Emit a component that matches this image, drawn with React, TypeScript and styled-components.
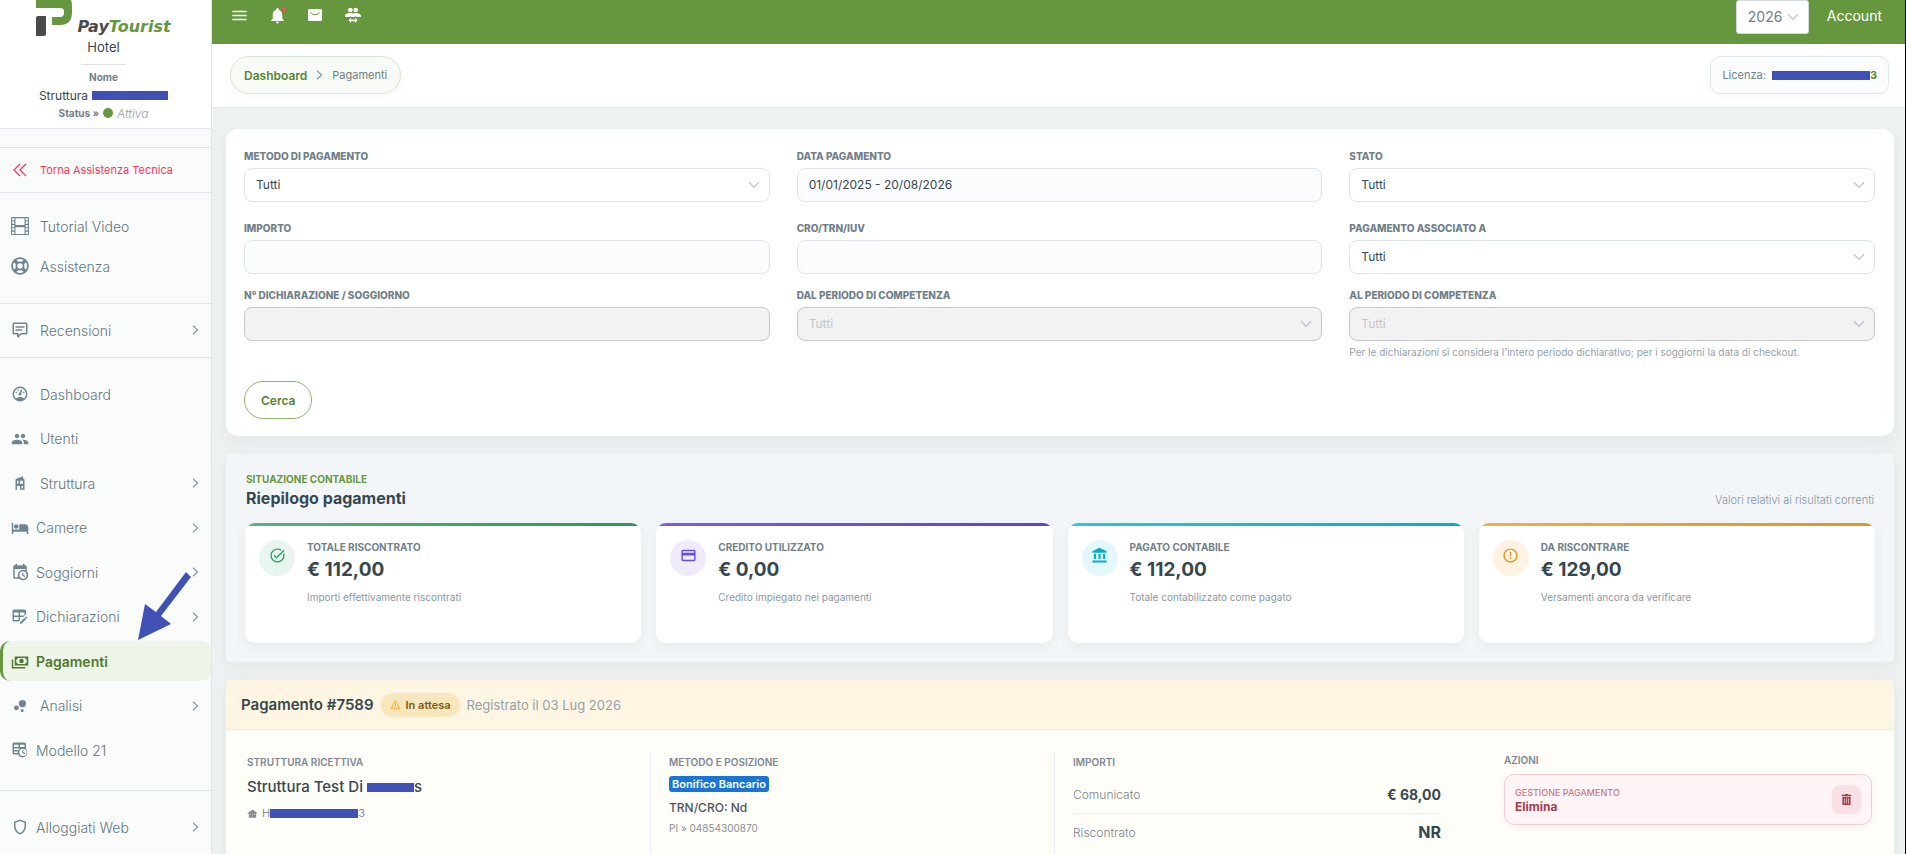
import React from "react";
import styled, { createGlobalStyle, css } from "styled-components";
import {
  MdAccountBalance,
  MdBubbleChart,
  MdCreditCard,
  MdErrorOutline,
  MdGroup,
  MdHotel,
  MdMenu,
  MdNotifications,
  MdOtherHouses,
  MdOutlineShield,
  MdTaskAlt,
  MdWarningAmber,
} from "react-icons/md";
import { BsFilm } from "react-icons/bs";
import { FaRegLifeRing, FaTrashAlt } from "react-icons/fa";

const green = "#66963d";
const ink = "#37474f";
const slate = "#6f8089";
const line = "#dde5ea";
const marker = "#3f51b5";

const GlobalStyle = createGlobalStyle`
  *, *::before, *::after { box-sizing: border-box; }
  body {
    margin: 0;
    font-family: Inter, "Open Sans", "Liberation Sans", sans-serif;
    font-size: 12px;
    color: ${ink};
    background: #edf1f2;
  }
  button, input, select { font-family: inherit; }
  a { color: inherit; text-decoration: none; }
  svg { display: block; flex: none; }
`;

const Shell = styled.div`
  display: flex;
  height: 100vh;
  overflow: hidden;
  border-right: 1px solid #000;
`;

/* Sidebar */

const Sidebar = styled.aside`
  position: relative;
  flex: none;
  width: 212px;
  background: #fafcfc;
  border-right: 1px solid ${line};
`;

const Profile = styled.div`
  display: flex;
  flex-direction: column;
  align-items: center;
  height: 129px;
  padding-right: 4px;
  background: #fff;
  border-bottom: 1px solid ${line};
`;

const Logo = styled.a`
  display: flex;
  align-items: flex-end;
  gap: 5px;
`;

const LogoText = styled.span`
  font: italic bold 16px/18px "DejaVu Sans", sans-serif;
  color: #4a4a4a;

  b {
    color: ${green};
  }
`;

const ProfileKind = styled.div`
  font-size: 13px;
  line-height: 22px;
`;

const ProfileRule = styled.hr`
  width: 45px;
  margin: 6px 0 3px;
  border: 0;
  border-top: 1px solid ${line};
`;

const ProfileLine = styled.div`
  display: flex;
  align-items: center;
  gap: 4px;
  height: 18px;
  font-size: 12px;

  b {
    font-size: 10px;
    color: ${slate};
  }
  i {
    color: #90a0a9;
    font-weight: 300;
  }
`;

const StatusDot = styled.span`
  width: 10px;
  height: 10px;
  border-radius: 50%;
  background: ${green};
`;

const Redaction = styled.span<{ $width: number }>`
  display: inline-block;
  width: ${(p) => p.$width}px;
  height: 9px;
  background: ${marker};
`;

const NavGroup = styled.nav<{ $height: number; $top?: number; $bottom?: number }>`
  display: flex;
  flex-direction: column;
  justify-content: space-between;
  min-height: ${(p) => p.$height}px;
  padding: ${(p) => p.$top ?? 0}px 0 ${(p) => p.$bottom ?? p.$top ?? 0}px;
  border-bottom: 1px solid ${line};
`;

const NavItem = styled.a<{ $active?: boolean; $tight?: boolean; $alert?: boolean }>`
  display: flex;
  align-items: center;
  gap: ${(p) => (p.$tight ? 7 : 11)}px;
  height: 40px;
  padding: 0 12px 0 11px;
  font-size: 14px;
  font-weight: 300;
  color: #64757e;

  svg {
    color: #6f8590;
  }
  ${(p) =>
    p.$alert &&
    css`
      font-size: 11px;
      font-weight: 400;
      color: #ef3b56;
      svg {
        color: #ef3b56;
      }
    `}
  ${(p) =>
    p.$active &&
    css`
      font-weight: 600;
      color: #4f7a2c;
      background: #edf4e8;
      border-left: 3px solid ${green};
      border-radius: 10px;
      padding-left: 8px;
      svg {
        color: #4f7a2c;
      }
    `}
`;

const NavLabel = styled.span`
  flex: 1;
`;

const PointerArrow = styled.svg`
  position: absolute;
  left: 136px;
  top: 570px;
`;

/* Top bar */

const Main = styled.div`
  display: flex;
  flex-direction: column;
  flex: 1;
  min-width: 0;
`;

const TopBar = styled.header`
  display: flex;
  align-items: flex-start;
  justify-content: space-between;
  height: 44px;
  padding: 0 23px 0 17px;
  background: ${green};
`;

const TopIcons = styled.div`
  display: flex;
  gap: 18px;
  padding-top: 5px;
`;

const IconButton = styled.button`
  position: relative;
  display: grid;
  place-items: center;
  width: 20px;
  height: 20px;
  padding: 0;
  border: 0;
  background: none;
  color: #fff;
`;

const AlertDot = styled.span`
  position: absolute;
  top: 2px;
  right: 1px;
  width: 5px;
  height: 5px;
  border-radius: 50%;
  background: #ef5350;
`;

const TopRight = styled.div`
  display: flex;
  gap: 18px;
  font-size: 14px;
  line-height: 32px;
  color: #fff;
`;

const SelectWrap = styled.div`
  position: relative;
  display: flex;
  width: 100%;

  svg {
    position: absolute;
    right: 10px;
    top: 13px;
    pointer-events: none;
  }
`;

const YearWrap = styled(SelectWrap)`
  width: 73px;
`;

const YearSelect = styled.select`
  width: 73px;
  height: 34px;
  padding: 0 24px 2px 11px;
  appearance: none;
  border: 1px solid #d3dadf;
  border-radius: 3px;
  background: #fff;
  font-size: 14px;
  color: ${slate};
`;

const SubHeader = styled.div`
  display: flex;
  flex: none;
  justify-content: space-between;
  height: 64px;
  padding: 12px 16px 0 18px;
  background: #fff;
  border-bottom: 1px solid ${line};
`;

const Breadcrumb = styled.nav`
  display: flex;
  align-items: center;
  gap: 9px;
  height: 38px;
  padding: 0 13px;
  border: 1px solid #d9e6cf;
  border-radius: 19px;
  background: #f8faf6;
  box-shadow: 0 3px 8px rgba(60, 80, 90, 0.04);
  font-size: 11px;
  color: ${slate};

  a {
    font-size: 12px;
    font-weight: 600;
    color: #568530;
  }
`;

const License = styled.div`
  display: flex;
  align-items: center;
  height: 38px;
  padding: 0 11px;
  border: 1px solid #e0e7ec;
  border-radius: 10px;
  background: #fafcfe;
  box-shadow: 0 3px 8px rgba(60, 80, 90, 0.04);
  font-size: 11px;
  color: ${slate};

  b {
    display: flex;
    align-items: center;
    margin-left: 6px;
    color: #568530;
  }
`;

/* Content */

const Content = styled.main`
  display: flex;
  flex-direction: column;
  flex: 1;
  gap: 18px;
  min-height: 0;
  padding: 21px 11px 0 14px;
  overflow: hidden;
`;

const FilterCard = styled.form`
  flex: none;
  padding: 19px 19px 17px 18px;
  border-radius: 12px;
  background: #fff;
  box-shadow: 0 6px 18px rgba(60, 80, 90, 0.06);
`;

const FieldRow = styled.div<{ $after: number }>`
  display: grid;
  grid-template-columns: repeat(3, 1fr);
  column-gap: 27px;
  margin-bottom: ${(p) => p.$after}px;
`;

const Field = styled.div`
  display: flex;
  flex-direction: column;
  gap: 4px;
`;

const FieldLabel = styled.label`
  font-size: 10px;
  line-height: 16px;
  font-weight: 800;
  text-transform: uppercase;
  color: ${slate};
`;

const control = css`
  width: 100%;
  height: 34px;
  padding: 0 11px 2px;
  border: 1px solid ${line};
  border-radius: 8px;
  font-size: 12px;
  color: ${ink};

  &:disabled {
    border-color: #c6c8ca;
    background: #f2f2f2;
    color: #c4c7c9;
    opacity: 1;
  }
`;

const TextInput = styled.input`
  ${control}
  background: #fafcfe;
`;

const SelectInput = styled.select`
  ${control}
  appearance: none;
  background: #fff;
`;

const Help = styled.small`
  font-size: 10px;
  line-height: 14px;
  color: #93a1a9;
`;

const SearchButton = styled.button`
  height: 38px;
  padding: 0 16px;
  border: 1px solid #8fb470;
  border-radius: 19px;
  background: #fff;
  font-size: 12px;
  font-weight: 600;
  color: #568530;
`;

const Summary = styled.section`
  flex: none;
  padding: 17px 19px 19px;
  border-radius: 3px;
  background: #f3f6f9;
  box-shadow: 0 6px 18px rgba(60, 80, 90, 0.06);
`;

const SummaryHead = styled.div`
  display: flex;
  justify-content: space-between;
  align-items: flex-end;
  margin-bottom: 14px;
  padding: 0 1px;
`;

const Eyebrow = styled.div`
  font-size: 10px;
  line-height: 16px;
  font-weight: 700;
  text-transform: uppercase;
  color: ${green};
`;

const SummaryTitle = styled.h2`
  margin: 0;
  font-size: 16px;
  line-height: 22px;
  font-weight: 700;
`;

const SummaryNote = styled.span`
  font-size: 11px;
  line-height: 18px;
  font-weight: 300;
  color: #84939c;
`;

const StatGrid = styled.div`
  display: grid;
  grid-template-columns: repeat(4, 1fr);
  gap: 15px;
`;

const StatCard = styled.article<{ $from: string; $to: string }>`
  display: flex;
  gap: 12px;
  height: 120px;
  padding: 16px 14px;
  border-radius: 10px;
  background: linear-gradient(90deg, ${(p) => p.$from}, ${(p) => p.$to}) top / 100% 3px no-repeat #fff;
  box-shadow: 0 4px 12px rgba(60, 80, 90, 0.07);
`;

const StatIcon = styled.div<{ $tint: string; $color: string }>`
  display: flex;
  justify-content: center;
  flex: none;
  width: 36px;
  height: 36px;
  margin-top: 1px;
  padding-top: 7px;
  border-radius: 50%;
  background: ${(p) => p.$tint};
  color: ${(p) => p.$color};
`;

const StatLabel = styled.div`
  font-size: 10px;
  line-height: 16px;
  font-weight: 700;
  text-transform: uppercase;
  color: ${slate};
`;

const StatValue = styled.div`
  margin: 1px 0 5px;
  font-size: 19px;
  line-height: 28px;
  font-weight: 700;
`;

const StatNote = styled.div`
  font-size: 10px;
  line-height: 16px;
  color: #8a989f;
`;

const Payment = styled.section`
  display: flex;
  flex-direction: column;
  flex: 1;
  min-height: 174px;
  border-radius: 3px 3px 0 0;
  background: #fefdf8;
  box-shadow: 0 6px 18px rgba(60, 80, 90, 0.06);
`;

const PaymentHead = styled.div`
  display: flex;
  align-items: center;
  gap: 7px;
  height: 50px;
  padding: 0 15px;
  border-bottom: 1px solid #ebecf1;
  border-radius: 3px 3px 0 0;
  background: #fef5e3;
  font-size: 13px;
  color: #93a1a9;
`;

const PaymentTitle = styled.h3`
  margin: 0;
  font-size: 15px;
  font-weight: 600;
  color: ${ink};
`;

const StateBadge = styled.span`
  display: flex;
  align-items: center;
  gap: 5px;
  height: 24px;
  padding: 0 9px;
  border-radius: 12px;
  background: #f8e7bc;
  font-size: 11px;
  font-weight: 600;
  color: #7a5a1a;

  svg {
    color: #ffa726;
  }
`;

const PaymentBody = styled.div`
  display: grid;
  grid-template-columns: 403fr 404fr 404fr 414fr;
  flex: 1;
  padding: 22px 22px 0 21px;
`;

const Column = styled.div<{ $divided?: boolean }>`
  display: flex;
  flex-direction: column;
  align-items: flex-start;
  padding: 2px 17px 0 0;
  ${(p) =>
    p.$divided &&
    css`
      padding-left: 18px;
      border-left: 1px solid #ebecf3;
    `}
`;

const ActionColumn = styled.div`
  display: flex;
  flex-direction: column;
  padding-left: 46px;
`;

const ColumnLabel = styled.div`
  margin-bottom: 6px;
  font-size: 10px;
  line-height: 16px;
  font-weight: 600;
  text-transform: uppercase;
  color: #7d8795;
`;

const FacilityName = styled.div`
  display: flex;
  align-items: center;
  gap: 4px;
  margin-bottom: 7px;
  font-size: 15px;
  line-height: 22px;
  font-weight: 500;
`;

const Hidden = styled.span`
  display: flex;
  align-items: center;
`;

const FacilityCode = styled.div`
  display: flex;
  align-items: center;
  font-size: 11px;
  line-height: 16px;
  color: #8a8f94;

  svg {
    margin-right: 4px;
  }
`;

const MethodBadge = styled.span`
  padding: 0 3px;
  border-radius: 3px;
  background: #1976d2;
  font-size: 11px;
  line-height: 16px;
  font-weight: 600;
  color: #fff;
`;

const Reference = styled.div`
  margin: 7px 0 3px;
  font-size: 12px;
  line-height: 18px;
  font-weight: 500;
  color: #4a5560;
`;

const VatNumber = styled.div`
  font-size: 10px;
  line-height: 16px;
  color: #8a8f94;
`;

const AmountRow = styled.div<{ $big?: boolean }>`
  display: flex;
  align-items: center;
  justify-content: space-between;
  width: 100%;
  height: 37px;
  font-size: 12px;
  font-weight: 300;
  color: #7a838a;

  & + & {
    border-top: 1px solid #ebecf3;
  }
  strong {
    font-size: ${(p) => (p.$big ? 16 : 14)}px;
    font-weight: 700;
    color: ${ink};
  }
`;

const DeleteAction = styled.button`
  display: flex;
  align-items: center;
  justify-content: space-between;
  height: 51px;
  padding: 0 10px;
  border: 1px solid #f1cdd4;
  border-radius: 10px;
  background: #fff5f7;
  box-shadow: 0 3px 8px rgba(60, 80, 90, 0.05);
  text-align: left;
  font-size: 12px;
  line-height: 14px;
  font-weight: 700;
  color: #a63c4e;

  small {
    display: block;
    font-size: 9px;
    font-weight: 500;
    text-transform: uppercase;
    color: #c47a86;
  }
`;

const DeleteIcon = styled.span`
  display: grid;
  place-items: center;
  width: 29px;
  height: 29px;
  border-radius: 8px;
  background: #f8e1e5;
`;

const Glyph = ({ d, size = 18 }: { d: string; size?: number }) => (
  <svg width={size} height={size} viewBox="0 0 24 24" fill="currentColor" fillRule="evenodd" aria-hidden>
    <path d={d} />
  </svg>
);

const glyphs = {
  comment:
    "M9,22A1,1 0 0,1 8,21V18H4A2,2 0 0,1 2,16V4C2,2.89 2.9,2 4,2H20A2,2 0 0,1 22,4V16A2,2 0 0,1 20,18H13.9L10.2,21.71C10,21.9 9.75,22 9.5,22H9M10,16V19.08L13.08,16H20V4H4V16H10M6,7H18V9H6V7M6,11H15V13H6V11Z",
  gauge:
    "M12,2A10,10 0 0,0 2,12A10,10 0 0,0 12,22A10,10 0 0,0 22,12A10,10 0 0,0 12,2M12,4A8,8 0 0,1 20,12C20,14.4 19,16.5 17.3,18C15.9,16.7 14,16 12,16C10,16 8.2,16.7 6.7,18C5,16.5 4,14.4 4,12A8,8 0 0,1 12,4M14,5.89C13.62,5.9 13.26,6.15 13.1,6.54L11.81,9.77L11.71,10C11,10.13 10.41,10.6 10.14,11.26C9.73,12.29 10.23,13.45 11.26,13.86C12.29,14.27 13.45,13.77 13.86,12.74C14.12,12.08 14,11.32 13.57,10.76L13.67,10.5L14.96,7.29L14.97,7.26C15.17,6.75 14.92,6.17 14.41,5.96C14.28,5.91 14.15,5.89 14,5.89M10,6A1,1 0 0,0 9,7A1,1 0 0,0 10,8A1,1 0 0,0 11,7A1,1 0 0,0 10,6M7,9A1,1 0 0,0 6,10A1,1 0 0,0 7,11A1,1 0 0,0 8,10A1,1 0 0,0 7,9M17,9A1,1 0 0,0 16,10A1,1 0 0,0 17,11A1,1 0 0,0 18,10A1,1 0 0,0 17,9Z",
  building:
    "M6,21V8A2,2 0 0,1 8,6L16,3V6A2,2 0 0,1 18,8V21H12V16H8V21H6M14,19H16V16H14V19M8,13H10V9H8V13M12,13H16V9H12V13Z",
  calendarClock:
    "M15,13H16.5V15.82L18.94,17.23L18.19,18.53L15,16.69V13M19,8H5V19H9.67C9.24,18.09 9,17.07 9,16A7,7 0 0,1 16,9C17.07,9 18.09,9.24 19,9.67V8M5,21C3.89,21 3,20.1 3,19V5C3,3.89 3.89,3 5,3H6V1H8V3H16V1H18V3H19A2,2 0 0,1 21,5V11.1C22.24,12.36 23,14.09 23,16A7,7 0 0,1 16,23C14.09,23 12.36,22.24 11.1,21H5M16,11.15A4.85,4.85 0 0,0 11.15,16C11.15,18.68 13.32,20.85 16,20.85A4.85,4.85 0 0,0 20.85,16C20.85,13.32 18.68,11.15 16,11.15Z",
  tableEdit:
    "M21.7,13.35L20.7,14.35L18.65,12.3L19.65,11.3C19.86,11.08 20.21,11.08 20.42,11.3L21.7,12.58C21.92,12.79 21.92,13.14 21.7,13.35M12,18.94L18.07,12.88L20.12,14.93L14.06,21H12V18.94M4,2H18A2,2 0 0,1 20,4V8.17L16.17,12H12V16.17L10.17,18H4A2,2 0 0,1 2,16V4A2,2 0 0,1 4,2M4,6V10H10V6H4M12,6V10H18V6H12M4,12V16H10V12H4Z",
  cash:
    "M5,6H23V18H5V6M14,9A3,3 0 0,1 17,12A3,3 0 0,1 14,15A3,3 0 0,1 11,12A3,3 0 0,1 14,9M9,8A2,2 0 0,1 7,10V14A2,2 0 0,1 9,16H19A2,2 0 0,1 21,14V10A2,2 0 0,1 19,8H9M1,10H3V20H19V22H1V10Z",
  tableClock:
    "M4,2H18A2,2 0 0,1 20,4V10.3A7,7 0 0,1 16,22A7,7 0 0,1 9.7,18H4A2,2 0 0,1 2,16V4A2,2 0 0,1 4,2M4,5V8H10V5H4M12,5V8H18V5H12M4,10V12H10.300L12,9.800V10H4M4,14V16H9.100L9.300,14H4M16,10.2A4.9,4.9 0 0,0 16,20A4.9,4.9 0 0,0 16,10.2M15,12H16.5V14.8L18.9,16.2L18.2,17.5L15,15.7V12Z",
  switchUsers:
    "M8,1A3.5,3.5 0 0,1 8,8A3.5,3.5 0 0,1 8,1M16,1A3.5,3.5 0 0,1 16,8A3.5,3.5 0 0,1 16,1M0,15V13C0,10.5 4,9 8,9S11.5,9.5 12,10C12.500,9.5 13,9 16,9S24,10.500 24,13V15H17.500L15,13.500V15H9V13.500L6.500,15H0M5,20L9,16V18.800H15V16L19,20L15,24V21.200H9V24L5,20Z",
};

const Chevron = ({ dir, color = "#8497a1" }: { dir: "right" | "down"; color?: string }) =>
  dir === "right" ? (
    <svg width="7" height="10" viewBox="0 0 7 10" fill="none" stroke={color} strokeWidth="1.2" aria-hidden>
      <path d="M1 .8 5.600 5 1 9.200" />
    </svg>
  ) : (
    <svg width="12" height="8" viewBox="0 0 12 8" fill="none" stroke={color} strokeWidth="1.3" aria-hidden>
      <path d="M1 1.300 6 6.300 11 1.300" />
    </svg>
  );

type NavEntry = { label: string; icon: React.ReactNode; tight?: boolean; active?: boolean; more?: boolean };

const menu: NavEntry[] = [
  { label: "Dashboard", icon: <Glyph d={glyphs.gauge} /> },
  { label: "Utenti", icon: <MdGroup size={18} /> },
  { label: "Struttura", icon: <Glyph d={glyphs.building} />, more: true },
  { label: "Camere", icon: <MdHotel size={18} />, tight: true, more: true },
  { label: "Soggiorni", icon: <Glyph d={glyphs.calendarClock} />, tight: true, more: true },
  { label: "Dichiarazioni", icon: <Glyph d={glyphs.tableEdit} />, tight: true, more: true },
  { label: "Pagamenti", icon: <Glyph d={glyphs.cash} />, tight: true, active: true },
  { label: "Analisi", icon: <MdBubbleChart size={18} />, more: true },
  { label: "Modello 21", icon: <Glyph d={glyphs.tableClock} />, tight: true },
];

const NavLink = ({ label, icon, tight, active, more }: NavEntry) => (
  <NavItem href="#" $tight={tight} $active={active} aria-current={active ? "page" : undefined}>
    {icon}
    <NavLabel>{label}</NavLabel>
    {more && <Chevron dir="right" />}
  </NavItem>
);

const stats = [
  { label: "Totale riscontrato", value: "€ 112,00", note: "Importi effettivamente riscontrati", icon: <MdTaskAlt size={17} />, from: "#54b77c", to: "#2f955c", tint: "#e9f5ef", color: "#36a069" },
  { label: "Credito utilizzato", value: "€ 0,00", note: "Credito impiegato nei pagamenti", icon: <MdCreditCard size={17} />, from: "#7a5cec", to: "#5b45cc", tint: "#efebfd", color: "#6a4fdc" },
  { label: "Pagato contabile", value: "€ 112,00", note: "Totale contabilizzato come pagato", icon: <MdAccountBalance size={17} />, from: "#2bc6da", to: "#05adc4", tint: "#e4f8fc", color: "#06acc4" },
  { label: "Da riscontrare", value: "€ 129,00", note: "Versamenti ancora da verificare", icon: <MdErrorOutline size={17} />, from: "#f0b044", to: "#dc9520", tint: "#fef3e2", color: "#dd9527" },
];

type FieldProps = { id: string; label: string; kind: "text" | "select"; value?: string; disabled?: boolean; help?: string };

const FormField = ({ id, label, kind, value = "", disabled, help }: FieldProps) => (
  <Field>
    <FieldLabel htmlFor={id}>{label}</FieldLabel>
    {kind === "text" ? (
      <TextInput id={id} defaultValue={value} disabled={disabled} />
    ) : (
      <SelectWrap>
        <SelectInput id={id} disabled={disabled}>
          <option>Tutti</option>
        </SelectInput>
        <Chevron dir="down" color="#bcc5d0" />
      </SelectWrap>
    )}
    {help && <Help>{help}</Help>}
  </Field>
);

export default function App() {
  return (
    <Shell>
      <GlobalStyle />
      <Sidebar>
        <Profile>
          <Logo href="#" aria-label="PayTourist">
            <svg width="36" height="36" viewBox="0 0 36 36" aria-hidden>
              <path d="M0 0H35Q36 2 36 5V12Q36 25 24 25H16V17H24Q28 17 28 13V11Q28 8 24 8H0Z" fill={green} />
              <path d="M2 16H10V34Q10 36 8 36H0V18Q0 16 2 16Z" fill="#4a4a4a" />
            </svg>
            <LogoText>
              Pay<b>Tourist</b>
            </LogoText>
          </Logo>
          <ProfileKind>Hotel</ProfileKind>
          <ProfileRule />
          <ProfileLine>
            <b>Nome</b>
          </ProfileLine>
          <ProfileLine>
            Struttura <Redaction $width={76} />
          </ProfileLine>
          <ProfileLine>
            <b>Status »</b>
            <StatusDot />
            <i>Attiva</i>
          </ProfileLine>
        </Profile>
        <NavGroup $height={19} />
        <NavGroup $height={45} $top={2}>
          <NavItem href="#" $alert>
            <svg width="18" height="18" viewBox="0 0 18 18" fill="none" stroke="currentColor" strokeWidth="1.3" aria-hidden>
              <path d="M9 3 3 9l6 6M15 3 9 9l6 6" />
            </svg>
            <NavLabel>Torna Assistenza Tecnica</NavLabel>
          </NavItem>
        </NavGroup>
        <NavGroup $height={111} $top={13} $bottom={17}>
          <NavItem href="#">
            <BsFilm size={18} />
            <NavLabel>Tutorial Video</NavLabel>
          </NavItem>
          <NavItem href="#">
            <FaRegLifeRing size={18} />
            <NavLabel>Assistenza</NavLabel>
          </NavItem>
        </NavGroup>
        <NavGroup $height={54} $top={6} $bottom={7}>
          <NavLink label="Recensioni" icon={<Glyph d={glyphs.comment} />} more />
        </NavGroup>
        <NavGroup $height={433} $top={16} $bottom={20}>
          {menu.map((entry) => (
            <NavLink key={entry.label} {...entry} />
          ))}
        </NavGroup>
        <NavGroup $height={63} $top={16}>
          <NavLink label="Alloggiati Web" icon={<MdOutlineShield size={18} />} tight more />
        </NavGroup>
        <PointerArrow width="58" height="72" viewBox="136 570 58 72" aria-hidden>
          <path d="M138 640 145 604 156 612 186 572 191 577 161 616 171 624Z" fill={marker} />
        </PointerArrow>
      </Sidebar>

      <Main>
        <TopBar>
          <TopIcons>
            <IconButton aria-label="Menu">
              <MdMenu size={19} />
            </IconButton>
            <IconButton aria-label="Notifiche">
              <MdNotifications size={19} />
              <AlertDot />
            </IconButton>
            <IconButton aria-label="Messaggi">
              <svg width="14" height="12" viewBox="0 0 14 12" aria-hidden>
                <rect width="14" height="12" rx="1.500" fill="#fff" />
                <path d="M2.500 3.500Q7 8 11.500 3.500" fill="none" stroke={green} />
              </svg>
            </IconButton>
            <IconButton aria-label="Cambia utente">
              <Glyph d={glyphs.switchUsers} size={16} />
            </IconButton>
          </TopIcons>
          <TopRight>
            <YearWrap>
              <YearSelect aria-label="Anno">
                <option>2026</option>
              </YearSelect>
              <Chevron dir="down" color="#bcc5d0" />
            </YearWrap>
            <a href="#">Account</a>
          </TopRight>
        </TopBar>
        <SubHeader>
          <Breadcrumb aria-label="Percorso">
            <a href="#">Dashboard</a>
            <Chevron dir="right" />
            <span>Pagamenti</span>
          </Breadcrumb>
          <License>
            Licenza:
            <b>
              <Redaction $width={98} />3
            </b>
          </License>
        </SubHeader>

        <Content>
          <FilterCard>
            <FieldRow $after={18}>
              <FormField id="metodo" label="Metodo di pagamento" kind="select" />
              <FormField id="data" label="Data pagamento" kind="text" value="01/01/2025 - 20/08/2026" />
              <FormField id="stato" label="Stato" kind="select" />
            </FieldRow>
            <FieldRow $after={13}>
              <FormField id="importo" label="Importo" kind="text" />
              <FormField id="cro" label="CRO/TRN/IUV" kind="text" />
              <FormField id="associato" label="Pagamento associato a" kind="select" />
            </FieldRow>
            <FieldRow $after={22}>
              <FormField id="numero" label="N° dichiarazione / soggiorno" kind="text" disabled />
              <FormField id="dal" label="Dal periodo di competenza" kind="select" disabled />
              <FormField
                id="al"
                label="Al periodo di competenza"
                kind="select"
                disabled
                help="Per le dichiarazioni si considera l'intero periodo dichiarativo; per i soggiorni la data di checkout."
              />
            </FieldRow>
            <SearchButton type="button">Cerca</SearchButton>
          </FilterCard>

          <Summary>
            <SummaryHead>
              <div>
                <Eyebrow>Situazione contabile</Eyebrow>
                <SummaryTitle>Riepilogo pagamenti</SummaryTitle>
              </div>
              <SummaryNote>Valori relativi ai risultati correnti</SummaryNote>
            </SummaryHead>
            <StatGrid>
              {stats.map((s) => (
                <StatCard key={s.label} $from={s.from} $to={s.to}>
                  <StatIcon $tint={s.tint} $color={s.color}>
                    {s.icon}
                  </StatIcon>
                  <div>
                    <StatLabel>{s.label}</StatLabel>
                    <StatValue>{s.value}</StatValue>
                    <StatNote>{s.note}</StatNote>
                  </div>
                </StatCard>
              ))}
            </StatGrid>
          </Summary>

          <Payment>
            <PaymentHead>
              <PaymentTitle>Pagamento #7589</PaymentTitle>
              <StateBadge>
                <MdWarningAmber size={11} />
                In attesa
              </StateBadge>
              <span>Registrato il 03 Lug 2026</span>
            </PaymentHead>
            <PaymentBody>
              <Column>
                <ColumnLabel>Struttura ricettiva</ColumnLabel>
                <FacilityName>
                  Struttura Test Di
                  <Hidden>
                    <Redaction $width={47} />s
                  </Hidden>
                </FacilityName>
                <FacilityCode>
                  <MdOtherHouses size={11} />H
                  <Redaction $width={88} />3
                </FacilityCode>
              </Column>
              <Column $divided>
                <ColumnLabel>Metodo e posizione</ColumnLabel>
                <MethodBadge>Bonifico Bancario</MethodBadge>
                <Reference>TRN/CRO: Nd</Reference>
                <VatNumber>PI » 04854300870</VatNumber>
              </Column>
              <Column $divided>
                <ColumnLabel>Importi</ColumnLabel>
                <AmountRow>
                  Comunicato <strong>€ 68,00</strong>
                </AmountRow>
                <AmountRow $big>
                  Riscontrato <strong>NR</strong>
                </AmountRow>
              </Column>
              <ActionColumn>
                <ColumnLabel>Azioni</ColumnLabel>
                <DeleteAction>
                  <span>
                    <small>Gestione pagamento</small>
                    Elimina
                  </span>
                  <DeleteIcon>
                    <FaTrashAlt size={11} />
                  </DeleteIcon>
                </DeleteAction>
              </ActionColumn>
            </PaymentBody>
          </Payment>
        </Content>
      </Main>
    </Shell>
  );
}
